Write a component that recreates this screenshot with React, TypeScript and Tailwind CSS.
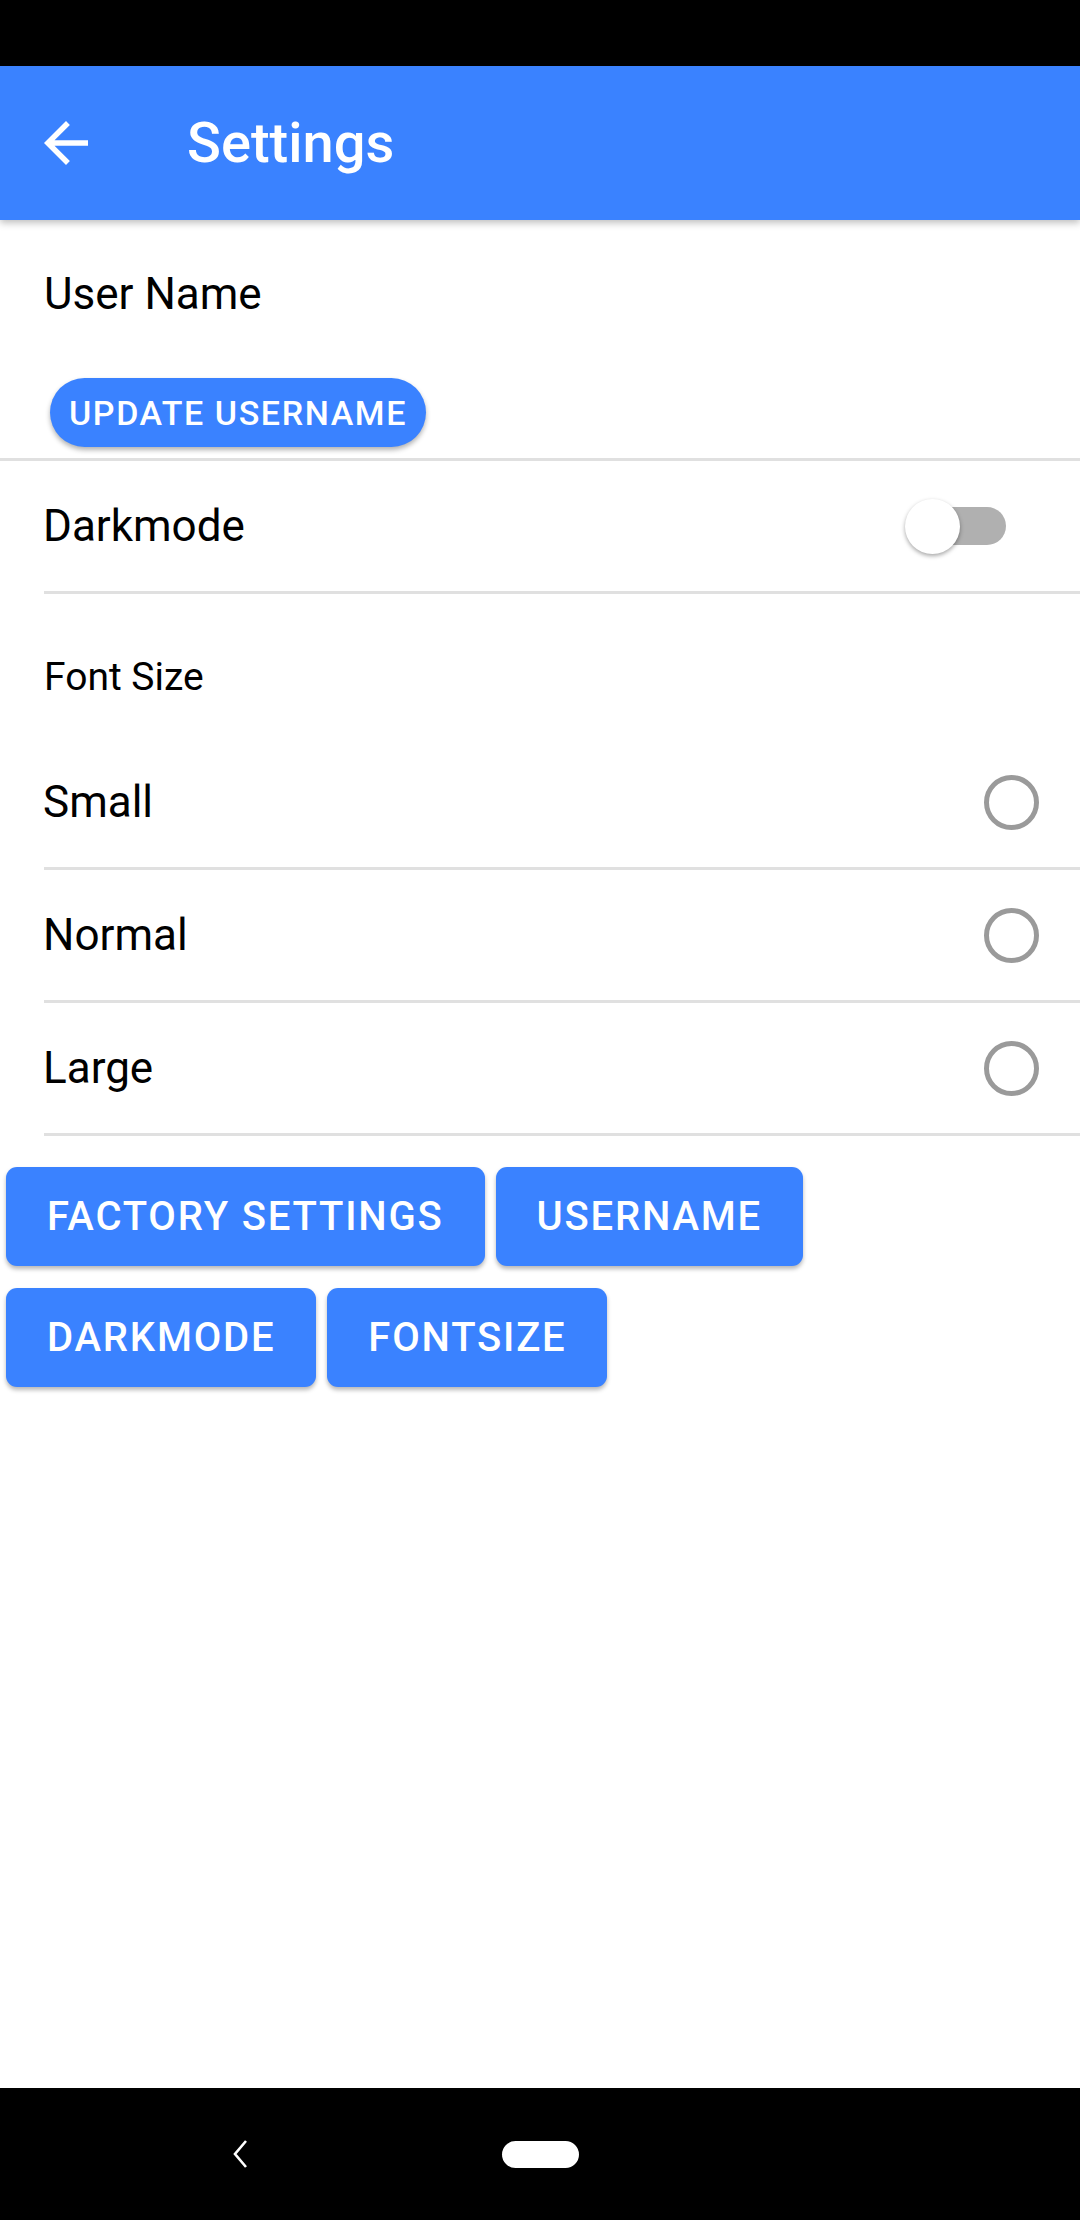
import React from "react";

function Divider({ inset = false }: { inset?: boolean }) {
  return <div className={inset ? "ml-[44px] h-[3px] bg-[#e0e0e0]" : "h-[3px] bg-[#e0e0e0]"} />;
}

function Radio() {
  return <div className="w-[55px] h-[55px] rounded-full border-[5.5px] border-[#9a9a9a]" />;
}

function BigButton({ label }: { label: string }) {
  return (
    <div className="h-[99px] px-[41px] flex items-center rounded-[11px] bg-[#3a82ff] text-white text-[40px] font-medium tracking-[1.8px] leading-none shadow-[0_3px_4px_rgba(0,0,0,0.28)]">
      {label}
    </div>
  );
}

export default function App() {
  const sizes = ["Small", "Normal", "Large"];
  return (
    <div className="w-[1080px] h-[2220px] flex flex-col bg-white font-[Roboto,sans-serif] overflow-hidden">
      <div className="h-[66px] bg-black shrink-0" />
      <div className="h-[154px] shrink-0 bg-[#3a82ff] flex items-center relative z-10 shadow-[0_3px_7px_rgba(0,0,0,0.25)]">
        <svg className="ml-[33px] w-[66px] h-[66px]" viewBox="0 0 24 24" fill="white">
          <path d="M20 11H7.83l5.59-5.59L12 4l-8 8 8 8 1.41-1.41L7.83 13H20v-2z" />
        </svg>
        <div className="ml-[88px] text-white text-[56px] font-medium leading-none">Settings</div>
      </div>

      <div className="flex-1 flex flex-col">
        <div className="pt-[47px] pl-[44px] text-[44px] leading-[54px] text-black">User Name</div>
        <div className="mt-[57px] ml-[50px] flex">
          <div className="h-[69px] px-[19px] flex items-center rounded-full bg-[#3a82ff] text-white text-[34px] font-medium tracking-[1.6px] leading-none shadow-[0_3px_5px_rgba(0,0,0,0.3)]">
            UPDATE USERNAME
          </div>
        </div>
        <div className="mt-[11px]">
          <Divider />
        </div>

        <div className="h-[130px] flex items-center justify-between pl-[43px] pr-[74px]">
          <span className="text-[44px] text-black leading-none">Darkmode</span>
          <div className="relative w-[101px] h-[55px]">
            <div className="absolute right-0 top-[8.5px] w-[93px] h-[38px] rounded-full bg-[#b0b0b0]" />
            <div className="absolute left-0 top-0 w-[55px] h-[55px] rounded-full bg-white shadow-[0_2px_4px_rgba(0,0,0,0.35)]" />
          </div>
        </div>
        <Divider inset />

        <div className="h-[143px] pt-[61px] pl-[44px] text-[39px] leading-[44px] text-black">Font Size</div>

        {sizes.map((s) => (
          <React.Fragment key={s}>
            <div className="h-[130px] flex items-center justify-between pl-[43px] pr-[41px]">
              <span className="text-[44px] text-black leading-none">{s}</span>
              <Radio />
            </div>
            <Divider inset />
          </React.Fragment>
        ))}

        <div className="pt-[31px] pl-[6px] flex flex-col gap-[22px]">
          <div className="flex gap-[11px]">
            <BigButton label="FACTORY SETTINGS" />
            <BigButton label="USERNAME" />
          </div>
          <div className="flex gap-[11px]">
            <BigButton label="DARKMODE" />
            <BigButton label="FONTSIZE" />
          </div>
        </div>
      </div>

      <div className="h-[132px] shrink-0 bg-black flex items-center">
        <svg className="ml-[229px] w-[22px] h-[30px]" viewBox="0 0 22 30" fill="none">
          <polyline points="17,2 6,15 17,28" stroke="white" strokeWidth="2.6" strokeLinejoin="miter" />
        </svg>
        <div className="ml-[251px] w-[77px] h-[27px] rounded-[13.5px] bg-white" />
      </div>
    </div>
  );
}
